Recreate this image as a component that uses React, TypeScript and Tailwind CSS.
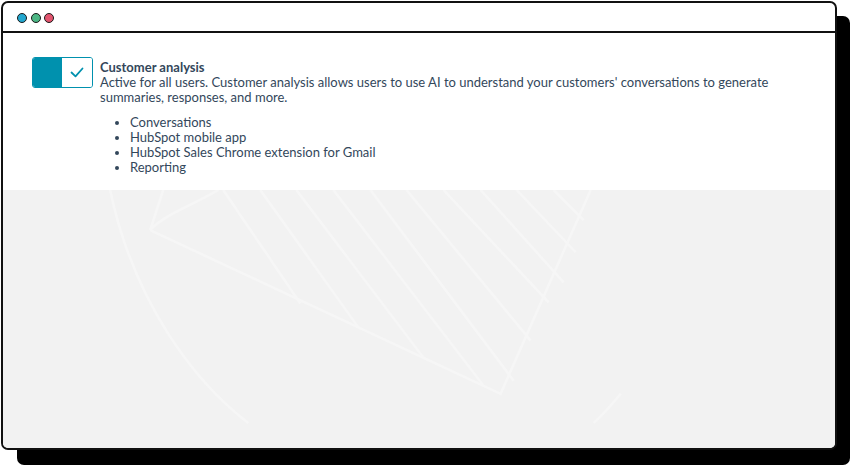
import React from "react";

function Dot({ color }: { color: string }) {
  return <span className="block h-[10px] w-[10px] rounded-full border-[1.5px] border-[#1a1a1a]" style={{ backgroundColor: color }} />;
}

function Pattern() {
  return (
    <svg className="absolute inset-0 h-full w-full" viewBox="0 0 831 257" preserveAspectRatio="none">
      <g fill="none" stroke="#f6f6f6" strokeWidth="2.5">
        <path d="M107 0 C 130 110, 190 190, 245 232" />
        <path d="M617 203 C 607 215, 598 225, 590 232" />
        <path d="M147 40 L 497 203 L 587 0" />
        <path d="M147 40 L 160 0" />
        <path d="M147 40 C 160 25, 190 15, 215 0" />
        <line x1="220" y1="0" x2="297" y2="113" />
        <line x1="257" y1="0" x2="355" y2="137" />
        <line x1="293" y1="0" x2="420" y2="167" />
        <line x1="330" y1="0" x2="480" y2="195" />
        <line x1="367" y1="0" x2="510" y2="190" />
        <line x1="403" y1="0" x2="527" y2="150" />
        <line x1="440" y1="0" x2="545" y2="112" />
        <line x1="477" y1="0" x2="560" y2="92" />
        <line x1="513" y1="0" x2="572" y2="62" />
        <line x1="550" y1="0" x2="580" y2="30" />
      </g>
    </svg>
  );
}

export default function App() {
  return (
    <div className="h-[467px] w-[852px] bg-white" style={{ fontFamily: "Lato, 'Noto Sans', sans-serif" }}>
      <div className="relative h-full w-full">
        <div className="absolute left-[17px] top-[16px] h-[449px] w-[833px] rounded-[7px] bg-black" />
        <div className="absolute left-[1px] top-[1px] flex h-[449px] w-[836px] flex-col overflow-hidden rounded-[7px] border-2 border-[#111] bg-white">
          <div className="flex h-[30px] items-center gap-[3.5px] border-b-2 border-[#111] pl-[14px] pt-[1px]">
            <Dot color="#22a7cf" />
            <Dot color="#4cb684" />
            <Dot color="#e2546e" />
          </div>
          <div className="flex gap-[7px] pl-[29px] pt-[24px] pb-[15px] text-[#33475b]">
            <div className="flex h-[31px] w-[61px] shrink-0 overflow-hidden rounded-[3px] border border-[#0091ae]">
              <div className="w-[29px] bg-[#0091ae]" />
              <div className="flex flex-1 items-center justify-center bg-white">
                <svg width="14" height="11" viewBox="0 0 14 11" fill="none">
                  <path d="M1.5 5.5 L5.5 9.3 L12.5 1.5" stroke="#0091ae" strokeWidth="1.8" strokeLinecap="round" strokeLinejoin="round" />
                </svg>
              </div>
            </div>
            <div className="pt-[3px]">
              <div className="text-[13px] font-bold leading-[15px]">Customer analysis</div>
              <p className="text-[13px] leading-[15px]">
                Active for all users. Customer analysis allows users to use AI to understand your customers' conversations to generate summaries, responses, and more.
              </p>
              <ul className="mt-[10px] list-disc pl-[30px] text-[13px] leading-[15px] marker:text-[#33475b]">
                <li>Conversations</li>
                <li>HubSpot mobile app</li>
                <li>HubSpot Sales Chrome extension for Gmail</li>
                <li>Reporting</li>
              </ul>
            </div>
          </div>
          <div className="relative flex-1 bg-[#f2f2f2]">
            <Pattern />
          </div>
        </div>
      </div>
    </div>
  );
}
